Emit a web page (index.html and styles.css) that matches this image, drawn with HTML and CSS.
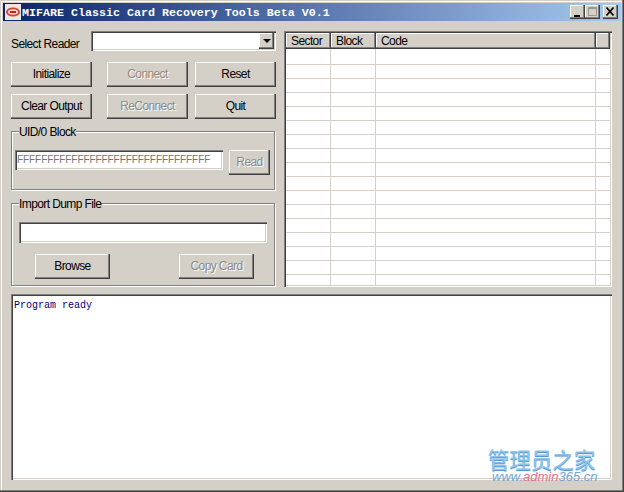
FILE: index.html
```html
<!DOCTYPE html>
<html lang="en">
<head>
    <meta charset="UTF-8">
    <title>MIFARE Classic Card Recovery Tools Beta V0.1</title>
    <link rel="stylesheet" href="styles.css">
</head>
<body>
    <div class="window">
        <!-- Title bar -->
        <div class="titlebar">
            <svg class="app-icon" width="16" height="16" viewBox="0 0 16 16">
                <rect width="16" height="16" fill="#efe6e0"/>
                <ellipse cx="8" cy="8" rx="7" ry="4.5" fill="#d9403a"/>
                <ellipse cx="8" cy="8" rx="5" ry="2.8" fill="#f4d8d0"/>
                <path d="M5 8h6" stroke="#c02020" stroke-width="2"/>
            </svg>
            <div class="title">MIFARE Classic Card Recovery Tools Beta V0.1</div>
            <div class="caption-btns">
                <div class="caption-btn">
                    <svg width="15" height="14" viewBox="0 0 15 14"><path d="M4 10h6v2H4z" fill="#000"/></svg>
                </div>
                <div class="caption-btn">
                    <svg width="15" height="14" viewBox="0 0 15 14"><path d="M3.500 2.500h8v8h-8zM3 3.500h9" fill="none" stroke="#9a978f"/></svg>
                </div>
                <div class="caption-btn close-btn">
                    <svg width="15" height="14" viewBox="0 0 15 14"><path d="M3.500 2.500l7 8M10.500 2.500l-7 8" fill="none" stroke="#000" stroke-width="1.700"/></svg>
                </div>
            </div>
        </div>

        <div class="client">
            <div class="top">
                <!-- Left panel -->
                <div class="left">
                    <div class="reader-row">
                        <span class="reader-label">Select Reader</span>
                        <div class="combo sunken">
                            <div class="combo-btn"><span class="arrow"></span></div>
                        </div>
                    </div>
                    <div class="btn-grid">
                        <button class="btn">Initialize</button>
                        <button class="btn disabled">Connect</button>
                        <button class="btn">Reset</button>
                        <button class="btn">Clear Output</button>
                        <button class="btn disabled">ReConnect</button>
                        <button class="btn">Quit</button>
                    </div>
                    <fieldset class="group uid-group">
                        <legend>UID/0 Block</legend>
                        <div class="uid-row">
                            <div class="field sunken uid-field">FFFFFFFFFFFFFFFFFFFFFFFFFFFFFFFF</div>
                            <button class="btn disabled read-btn">Read</button>
                        </div>
                    </fieldset>
                    <fieldset class="group dump-group">
                        <legend>Import Dump File</legend>
                        <div class="field sunken dump-field"></div>
                        <div class="dump-btns">
                            <button class="btn wide-btn">Browse</button>
                            <button class="btn wide-btn disabled">Copy Card</button>
                        </div>
                    </fieldset>
                </div>

                <!-- Sector list -->
                <div class="list sunken">
                    <div class="list-inner">
                        <div class="list-head">
                            <div class="head-cell col-sector">Sector</div>
                            <div class="head-cell col-block">Block</div>
                            <div class="head-cell col-code">Code</div>
                            <div class="head-cell col-rest"></div>
                        </div>
                        <div class="list-body" id="listBody"></div>
                    </div>
                </div>
            </div>

            <!-- Output -->
            <div class="output sunken">Program ready</div>
        </div>

        <div class="watermark">
            <div class="wm-cn">管理员之家</div>
            <div class="wm-url">www.<span class="wm-red">admin</span>365.cn</div>
        </div>
    </div>

    <script>
        // Build the empty rows of the list
        const listBody = document.getElementById('listBody');
        for (let i = 0; i < 17; i++) {
            const row = document.createElement('div');
            row.className = 'list-row';
            row.innerHTML = '<div class="col-sector"></div><div class="col-block"></div><div class="col-code"></div><div class="col-rest"></div>';
            listBody.appendChild(row);
        }
    </script>
</body>
</html>
```

FILE: styles.css
```css
html, body {
    margin: 0;
    padding: 0;
    height: 100%;
    overflow: hidden;
}
body {
    font-family: "Liberation Sans", Arial, sans-serif;
    font-size: 12px;
    letter-spacing: -0.6px;
    color: #000;
    background-color: #d4d0c8;
}
.window {
    position: relative;
    box-sizing: border-box;
    width: 624px;
    height: 492px;
    padding: 3px;
    background-color: #d4d0c8;
    box-shadow: inset -1px -1px 0 #404040, inset -2px -2px 0 #808080, inset 1px 1px 0 #d4d0c8, inset 2px 2px 0 #fff;
}
.titlebar {
    display: flex;
    align-items: center;
    height: 18px;
    padding-left: 2px;
    background: linear-gradient(to right, #0a246a, #a6caf0);
}
.app-icon {
    flex: none;
    margin-right: 1px;
}
.title {
    flex: 1;
    padding-top: 1px;
    font-family: "Liberation Mono", monospace;
    font-size: 11.67px;
    font-weight: bold;
    letter-spacing: 0;
    color: #fff;
    white-space: nowrap;
}
.caption-btns {
    display: flex;
    margin-right: 3px;
}
.caption-btn {
    width: 15px;
    height: 14px;
    background-color: #d4d0c8;
    box-shadow: inset -1px -1px 0 #404040, inset -2px -2px 0 #808080, inset 1px 1px 0 #fff;
}
.caption-btn svg {
    display: block;
}
.close-btn {
    margin-left: 3px;
}
.client {
    padding: 10px 9px 0 8px;
}
.top {
    display: flex;
    gap: 8px;
    height: 256px;
}
.left {
    width: 265px;
}
.reader-row {
    display: flex;
    align-items: center;
    height: 20px;
}
.reader-label {
    width: 80px;
    padding-top: 5px;
    white-space: nowrap;
}
.sunken {
    background-color: #fff;
    box-shadow: inset 1px 1px 0 #808080, inset 2px 2px 0 #404040, inset -1px -1px 0 #fff, inset -2px -2px 0 #d4d0c8;
}
.combo {
    display: flex;
    justify-content: flex-end;
    box-sizing: border-box;
    width: 185px;
    height: 20px;
    padding: 2px;
}
.combo-btn {
    display: flex;
    align-items: center;
    justify-content: center;
    width: 15px;
    height: 16px;
    background-color: #d4d0c8;
    box-shadow: inset -1px -1px 0 #404040, inset -2px -2px 0 #808080, inset 1px 1px 0 #fff;
}
.arrow {
    width: 0;
    height: 0;
    border-left: 4px solid transparent;
    border-right: 4px solid transparent;
    border-top: 4px solid #000;
}
.btn {
    display: block;
    box-sizing: border-box;
    margin: 0;
    padding: 0 0 2px;
    height: 25px;
    border: none;
    font-family: inherit;
    font-size: 12px;
    letter-spacing: -0.6px;
    color: #000;
    background-color: #d4d0c8;
    box-shadow: inset -1px -1px 0 #404040, inset -2px -2px 0 #808080, inset 1px 1px 0 #fff;
}
.btn.disabled {
    color: #8c8a84;
    text-shadow: 1px 1px 0 #fff;
}
.btn-grid {
    display: grid;
    grid-template-columns: 96px 88px 81px;
    row-gap: 7px;
    margin-top: 11px;
}
.btn-grid .btn {
    width: 81px;
}
.group {
    box-sizing: border-box;
    width: 264px;
    margin: 0;
    padding: 0;
    border: 1px solid #808080;
    box-shadow: 1px 1px 0 #fff, inset 1px 1px 0 #fff;
}
.group legend {
    margin-left: 7px;
    padding: 2px 0 0;
    line-height: 13px;
    background-color: #d4d0c8;
}
.uid-group {
    height: 66px;
    margin-top: 5px;
}
.uid-row {
    display: flex;
    gap: 6px;
    margin: 11px 0 0 3px;
}
.field {
    box-sizing: border-box;
    height: 20px;
}
.uid-field {
    width: 208px;
    padding: 3px 0 0 2px;
    font-size: 10px;
    letter-spacing: -0.07px;
    color: #77756f;
    line-height: 14px;
    white-space: nowrap;
}
.read-btn {
    width: 41px;
}
.dump-group {
    height: 90px;
    margin-top: 6px;
}
.dump-field {
    width: 248px;
    height: 21px;
    margin: 11px 0 0 7px;
}
.dump-btns {
    display: flex;
    justify-content: space-between;
    width: 219px;
    margin: 11px 0 0 23px;
}
.wide-btn {
    width: 75px;
}
.list {
    box-sizing: border-box;
    width: 328px;
    height: 256px;
    padding: 2px;
}
.list-inner {
    height: 252px;
    overflow: hidden;
}
.list-head {
    display: flex;
    height: 16px;
}
.head-cell {
    box-sizing: border-box;
    padding: 1px 0 0 5px;
    line-height: 14px;
    background-color: #d4d0c8;
    box-shadow: inset -1px -1px 0 #404040, inset -2px -2px 0 #808080, inset 1px 1px 0 #fff;
}
.col-sector {
    width: 45px;
}
.col-block {
    width: 45px;
}
.col-code {
    width: 220px;
}
.col-rest {
    flex: 1;
}
.list-body {
    padding-top: 2px;
}
.list-row {
    display: flex;
    box-sizing: border-box;
    height: 14px;
    border-bottom: 1px solid #d4d0c8;
}
.list-row:first-child {
    margin-top: -2px;
    height: 16px;
}
.list-row div {
    box-sizing: border-box;
    border-right: 1px solid #d4d0c8;
}
.list-row .col-rest {
    border-right: none;
}
.output {
    box-sizing: border-box;
    width: 601px;
    height: 186px;
    margin-top: 7px;
    padding: 6px 3px;
    font-family: "Liberation Mono", monospace;
    font-size: 10px;
    letter-spacing: 0;
    line-height: 12px;
    color: #000080;
}
.watermark {
    position: absolute;
    left: 488px;
    top: 447px;
    letter-spacing: 0;
    white-space: nowrap;
}
.wm-cn {
    font-family: "Noto Sans CJK SC", sans-serif;
    font-size: 21.500px;
    line-height: 23px;
    color: #8cc4f0;
    text-shadow: 0 1px 1px #3c86c8, -1px 0 0 #fff;
}
.wm-url {
    margin-left: 4px;
    font-family: "Liberation Sans", sans-serif;
    font-size: 13px;
    font-style: italic;
    line-height: 13px;
    color: #6fa4d8;
}
.wm-red {
    color: #e0708a;
}
```
